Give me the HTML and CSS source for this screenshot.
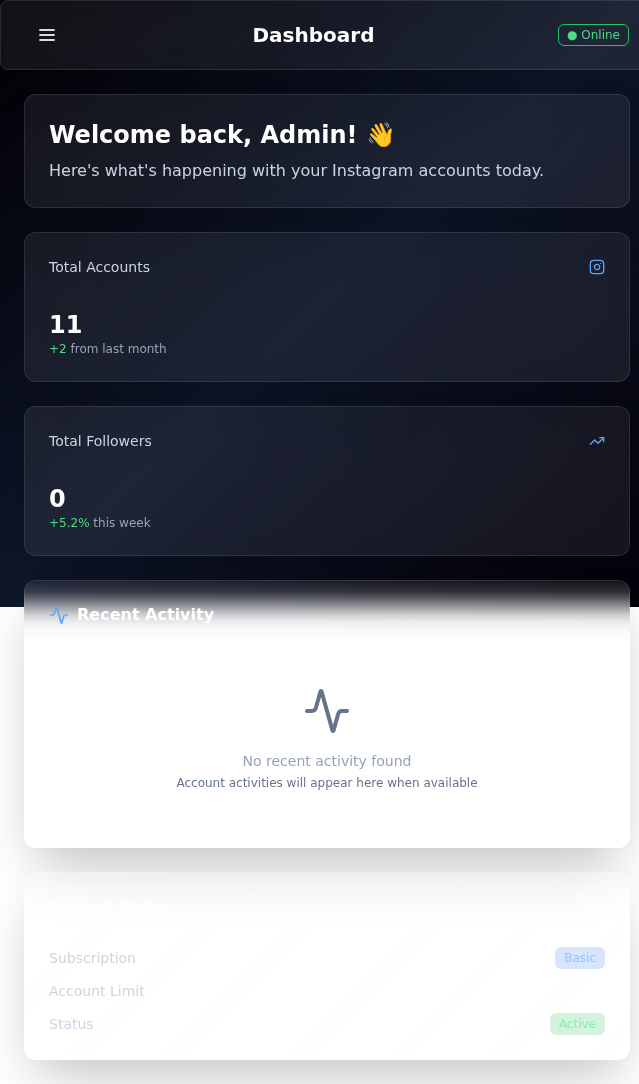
FILE: index.html
```html
<!DOCTYPE html>
<html lang="en">
<head>
<meta charset="utf-8">
<title>Dashboard</title>
<link rel="stylesheet" href="styles.css">
</head>
<body>
<div class="page">
  <header class="topbar glass">
    <button class="menu" aria-label="Menu">
      <svg class="icon-md" viewBox="0 0 24 24"><path d="M2.8 6h18.4M2.8 12h18.4M2.8 18h18.4"/></svg>
    </button>
    <h1>Dashboard</h1>
    <span class="badge online">● Online</span>
  </header>
  <main class="content">
    <section class="card glass welcome">
      <h2>Welcome back, Admin! 👋</h2>
      <p>Here's what's happening with your Instagram accounts today.</p>
    </section>
    <section class="card glass stat">
      <div class="stat-head"><span>Total Accounts</span>
        <svg class="icon-sm" viewBox="0 0 24 24"><rect x="2" y="2" width="20" height="20" rx="5"/><path d="M16 11.37A4 4 0 1 1 12.63 8 4 4 0 0 1 16 11.37z"/><path d="M17.5 6.5h.01"/></svg>
      </div>
      <div class="number">11</div>
      <p class="delta"><span>+2</span> from last month</p>
    </section>
    <section class="card glass stat">
      <div class="stat-head"><span>Total Followers</span>
        <svg class="icon-sm" viewBox="0 0 24 24"><path d="M22 7 13.5 15.5 8.5 10.5 2 17"/><path d="M16 7h6v6"/></svg>
      </div>
      <div class="number">0</div>
      <p class="delta"><span>+5.2%</span> this week</p>
    </section>
    <section class="card glass activity">
      <h3><svg class="icon-md" viewBox="0 0 24 24"><path d="M22 12h-2.48a2 2 0 0 0-1.93 1.46l-2.35 8.36a.25.25 0 0 1-.48 0L9.24 2.18a.25.25 0 0 0-.48 0l-2.35 8.36A2 2 0 0 1 4.49 12H2"/></svg>Recent Activity</h3>
      <div class="empty">
        <svg class="icon-lg" viewBox="0 0 24 24"><path d="M22 12h-2.48a2 2 0 0 0-1.93 1.46l-2.35 8.36a.25.25 0 0 1-.48 0L9.24 2.18a.25.25 0 0 0-.48 0l-2.35 8.36A2 2 0 0 1 4.49 12H2"/></svg>
        <p class="empty-title">No recent activity found</p>
        <p class="empty-note">Account activities will appear here when available</p>
      </div>
    </section>
    <section class="card glass status">
      <h3>Account Status</h3>
      <div class="rows">
        <div class="row"><span>Subscription</span><span class="badge basic">Basic</span></div>
        <div class="row"><span>Account Limit</span></div>
        <div class="row"><span>Status</span><span class="badge active">Active</span></div>
      </div>
    </section>
  </main>
</div>
</body>
</html>
```
FILE: styles.css
```css
* { box-sizing: border-box; margin: 0; padding: 0; }
html { overflow-x: hidden; background: #fff; }
body {
  min-height: 1084px;
  font-family: "DejaVu Sans", sans-serif;
  font-size: 14px;
  line-height: 20px;
  color: #fff;
}
.page {
  height: 607px;
  background: linear-gradient(to bottom right, #020005, #0f172a, #04010a);
}
.glass {
  background: linear-gradient(135deg, rgba(255, 255, 255, .07), rgba(255, 255, 255, .055) 50%, rgba(255, 255, 255, .07));
  background-origin: border-box;
  border: 1px solid rgba(255, 255, 255, .1);
  backdrop-filter: blur(12px);
  box-shadow: 0 25px 50px -12px rgba(0, 0, 0, .25);
}
svg {
  fill: none;
  stroke: currentColor;
  stroke-width: 2;
  stroke-linecap: round;
  stroke-linejoin: round;
  flex: none;
}
.icon-sm { width: 16px; height: 16px; color: #60a5fa; }
.icon-md { width: 20px; height: 20px; }
.icon-lg { width: 48px; height: 48px; color: #64748b; }
.topbar {
  width: 654px;
  height: 70px;
  padding: 0 24px;
  border-radius: 8px;
  display: flex;
  align-items: center;
  justify-content: space-between;
}
.menu {
  width: 44px;
  height: 44px;
  border: 0;
  background: none;
  color: #dcdcdf;
  display: grid;
  place-items: center;
}
.menu svg { stroke-width: 2.2; stroke-linecap: butt; }
h1 { font-size: 20px; line-height: 28px; }
.badge {
  height: 22px;
  padding: 2px 8px;
  border: 1px solid transparent;
  border-radius: 6px;
  font-size: 12px;
  line-height: 16px;
}
.online { color: #4ade80; border-color: #22c55e; }
.basic { color: #93c5fd; background: rgba(59, 130, 246, .2); }
.active { color: #86efac; background: rgba(34, 197, 94, .2); }
.content {
  width: 654px;
  padding: 24px;
  display: flex;
  flex-direction: column;
  gap: 24px;
}
.card { border-radius: 12px; padding: 24px; }
.welcome { height: 114px; }
.welcome h2 { font-size: 24px; line-height: 32px; margin-bottom: 8px; }
.welcome p { font-size: 16px; line-height: 24px; color: #cbd5e1; }
.stat { height: 150px; }
.stat-head {
  display: flex;
  justify-content: space-between;
  align-items: center;
  color: #cbd5e1;
  margin-bottom: 32px;
}
.number { font-size: 24px; line-height: 32px; font-weight: 700; }
.delta { font-size: 12px; line-height: 16px; color: #94a3b8; }
.delta span { color: #4ade80; }
.activity {
  height: 268px;
  background:
    linear-gradient(to bottom,
      rgba(255, 255, 255, 0) 2px,
      rgba(255, 255, 255, .09) 11px,
      rgba(255, 255, 255, .24) 17px,
      rgba(255, 255, 255, .43) 23px,
      rgba(255, 255, 255, .61) 29px,
      rgba(255, 255, 255, .79) 35px,
      rgba(255, 255, 255, .9) 41px,
      rgba(255, 255, 255, .955) 47px,
      rgba(255, 255, 255, .99) 55px,
      #fff 62px),
    linear-gradient(to right, #212637, #1c1d28 55%, #18151b);
  background-origin: border-box;
}
.activity h3 {
  display: flex;
  align-items: center;
  gap: 8px;
  font-size: 16px;
  line-height: 20px;
}
.activity h3 svg { color: #60a5fa; }
.empty {
  padding-top: 62px;
  display: flex;
  flex-direction: column;
  align-items: center;
}
.empty-title { color: #94a3b8; margin-top: 16px; }
.empty-note { font-size: 12px; line-height: 16px; color: #64748b; margin-top: 4px; }
.status { height: 188px; }
.status h3 { font-size: 14px; line-height: 20px; }
.rows { margin-top: 30px; display: flex; flex-direction: column; gap: 11px; }
.row {
  height: 22px;
  display: flex;
  align-items: center;
  justify-content: space-between;
  color: #cbd5e1;
}
```
